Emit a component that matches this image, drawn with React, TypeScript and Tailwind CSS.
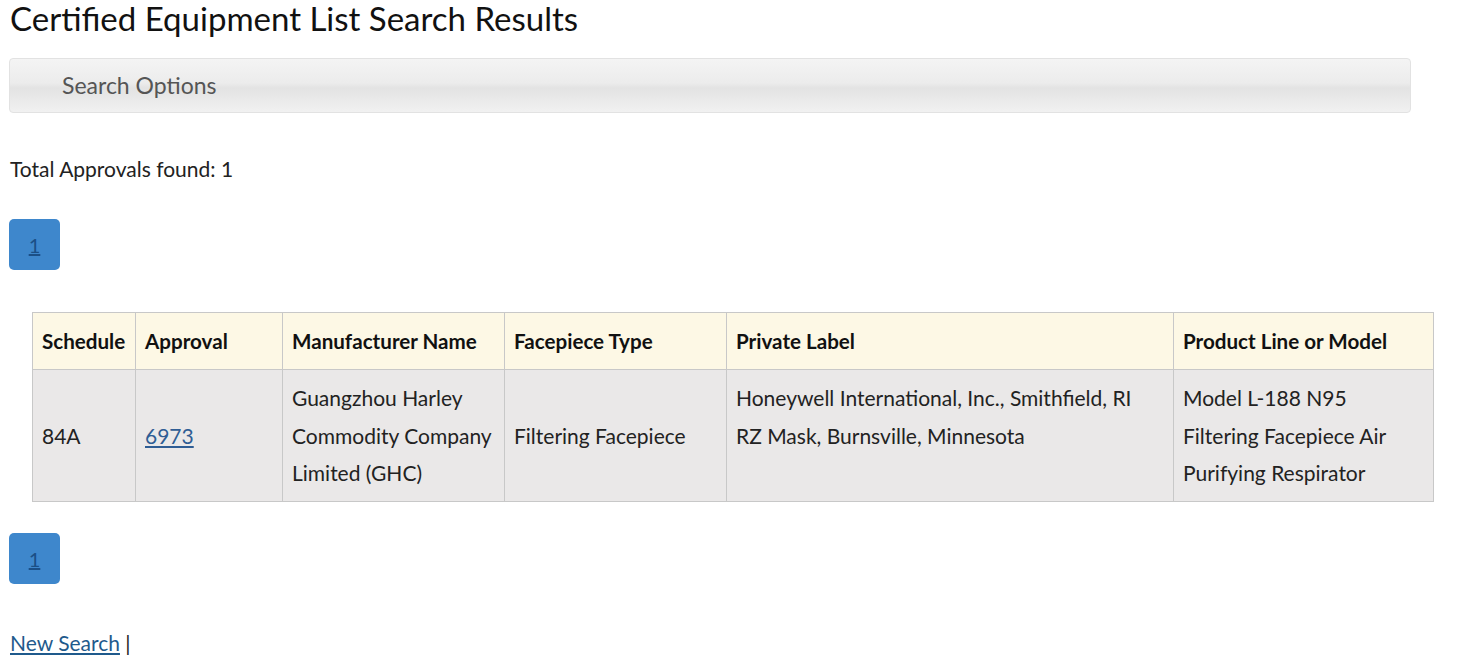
import React from "react";

const headers = [
  { label: "Schedule", w: "w-[103px]" },
  { label: "Approval", w: "w-[147px]" },
  { label: "Manufacturer Name", w: "w-[222px]" },
  { label: "Facepiece Type", w: "w-[222px]" },
  { label: "Private Label", w: "w-[447px]" },
  { label: "Product Line or Model", w: "w-[260px]" },
];

function PageButton() {
  return (
    <div className="w-[51px] h-[51px] rounded-[5px] bg-[#3e87cc] flex items-center justify-center">
      <a href="#" className="text-[20px] text-[#1b4f86] underline">
        1
      </a>
    </div>
  );
}

export default function App() {
  return (
    <div className="bg-white min-h-screen pl-[9px] pr-[48px] text-[#222] font-['Lato','Liberation_Sans',sans-serif]">
      <h1 className="text-[33px] leading-[36px] pl-[1px] text-[#111]">
        Certified Equipment List Search Results
      </h1>

      <div className="mt-[22px] h-[55px] rounded-[4px] border border-[#e2e2e2] bg-[linear-gradient(to_bottom,#f4f4f4_0%,#ececec_45%,#e3e3e3_55%,#f1f1f1_100%)] flex items-center pl-[52px]">
        <span className="text-[23px] text-[#555]">Search Options</span>
      </div>

      <p className="mt-[44px] pl-[1px] text-[21px] leading-[24px] text-[#222]">
        Total Approvals found: 1
      </p>

      <div className="mt-[38px]">
        <PageButton />
      </div>

      <table className="mt-[42px] ml-[23px] w-[1401px] table-fixed border-collapse text-[21px]">
        <thead>
          <tr className="bg-[#fdf8e5] h-[57px]">
            {headers.map((h) => (
              <th
                key={h.label}
                className={`${h.w} border border-[#c8c8c8] text-left font-bold text-[20.6px] px-[9px] text-[#111] whitespace-nowrap`}
              >
                {h.label}
              </th>
            ))}
          </tr>
        </thead>
        <tbody>
          <tr className="bg-[#eae8e8] h-[132px] leading-[37.5px] text-[#222]">
            <td className="border border-[#c8c8c8] px-[9px]">84A</td>
            <td className="border border-[#c8c8c8] px-[9px]">
              <a href="#" className="text-[#2f5d94] underline">
                6973
              </a>
            </td>
            <td className="border border-[#c8c8c8] px-[9px] whitespace-nowrap">
              Guangzhou Harley
              <br />
              Commodity Company
              <br />
              Limited (GHC)
            </td>
            <td className="border border-[#c8c8c8] px-[9px]">Filtering Facepiece</td>
            <td className="border border-[#c8c8c8] px-[9px] align-top pt-[9px]">
              Honeywell International, Inc., Smithfield, RI
              <br />
              RZ Mask, Burnsville, Minnesota
            </td>
            <td className="border border-[#c8c8c8] px-[9px] whitespace-nowrap">
              Model L-188 N95
              <br />
              Filtering Facepiece Air
              <br />
              Purifying Respirator
            </td>
          </tr>
        </tbody>
      </table>

      <div className="mt-[31px]">
        <PageButton />
      </div>

      <p className="mt-[47px] pl-[1px] text-[21px] leading-[24px]">
        <a href="#" className="text-[#1f5a8c] underline">
          New Search
        </a>{" "}
        <span className="text-[#222]">|</span>
      </p>
    </div>
  );
}
